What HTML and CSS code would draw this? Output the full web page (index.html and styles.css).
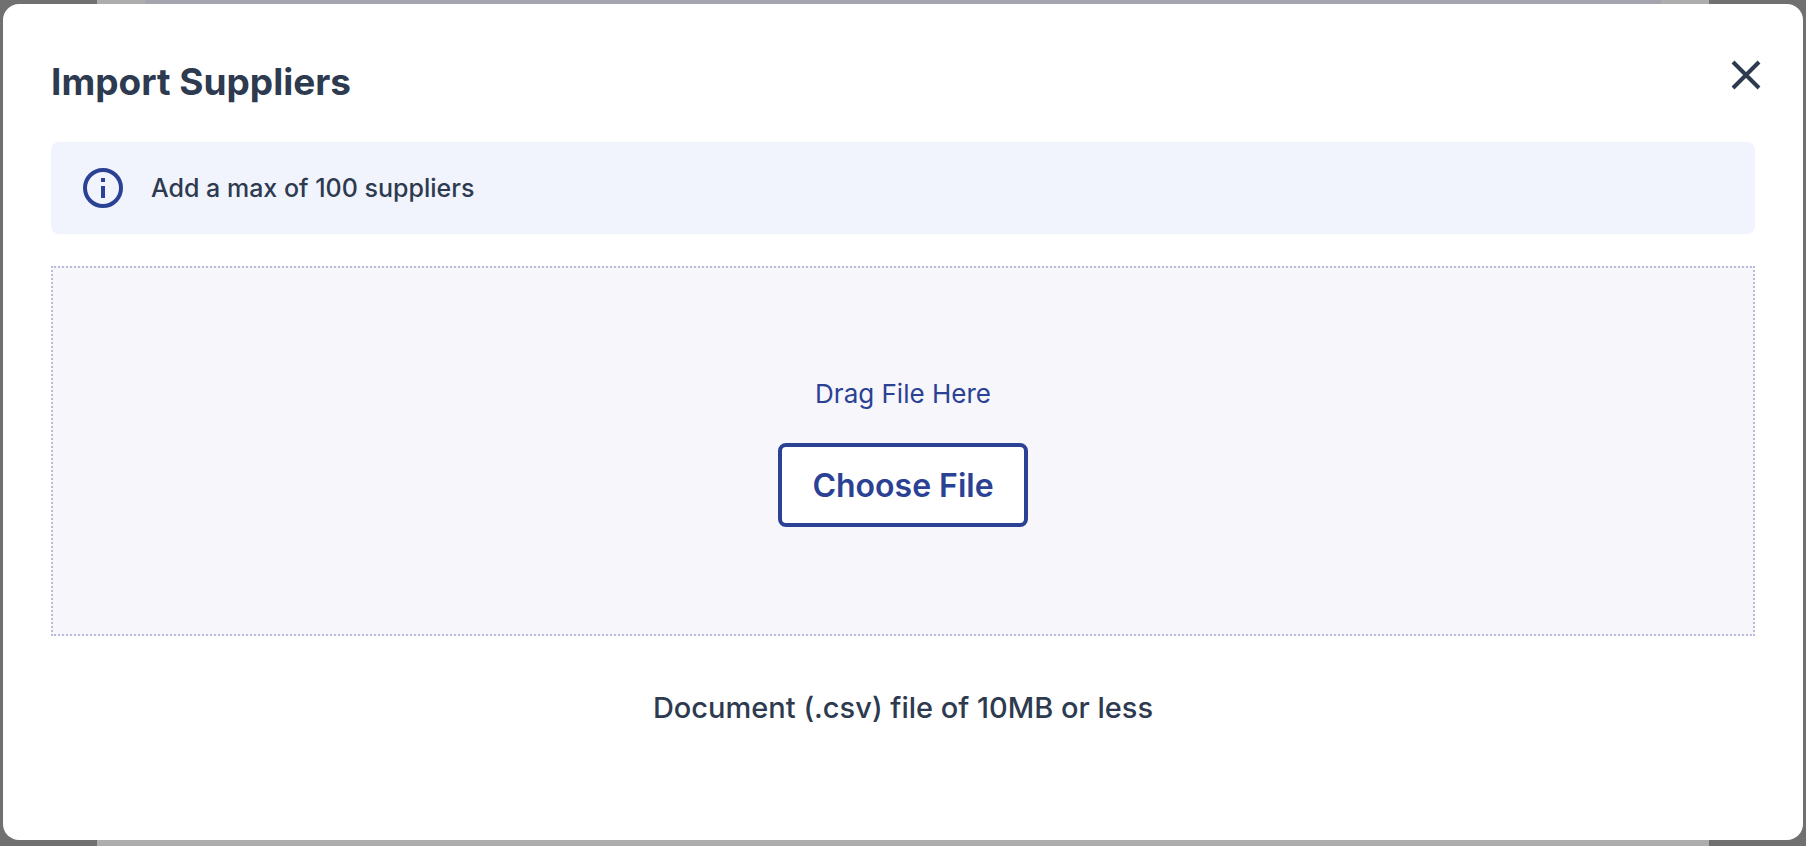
FILE: index.html
```html
<!DOCTYPE html>
<html lang="en">
<head>
<meta charset="utf-8">
<title>Import Suppliers</title>
<link rel="stylesheet" href="styles.css">
</head>
<body>
<div class="backdrop" aria-hidden="true"><div class="backdrop-page"><div class="backdrop-bar"></div></div></div>
<main class="modal" role="dialog" aria-labelledby="modal-title">
  <header class="modal-header">
    <h1 class="modal-title" id="modal-title">Import Suppliers</h1>
    <button class="close-button" type="button" aria-label="Close">
      <svg class="close-icon" viewBox="0 0 30 30" fill="none" stroke="currentColor" stroke-width="4"><path d="M2 2 28 28M28 2 2 28"/></svg>
    </button>
  </header>
  <div class="notice">
    <svg class="notice-icon" viewBox="0 0 40 40" fill="none" aria-hidden="true"><circle cx="20" cy="20" r="18" stroke="currentColor" stroke-width="4"/><path fill="currentColor" d="M18 10h4v4h-4zM18 18h4v12h-4z"/></svg>
    <p class="notice-text">Add a max of 100 suppliers</p>
  </div>
  <section class="dropzone">
    <p class="dropzone-text">Drag File Here</p>
    <button class="choose-button" type="button">Choose File</button>
  </section>
  <p class="file-hint">Document (.csv) file of 10MB or less</p>
</main>
</body>
</html>
```
FILE: styles.css
```css
* { box-sizing: border-box; }

body {
  min-height: 100vh;
  margin: 0;
  padding: 4px 3px 6px;
  display: flex;
  background: #707070;
  color: #2d3a4f;
  font-family: Inter, "Liberation Sans", sans-serif;
}

h1, p { margin: 0; }

button {
  border: 0;
  padding: 0;
  background: none;
  color: inherit;
  font: inherit;
  cursor: pointer;
}

.backdrop {
  position: fixed;
  inset: 0;
  z-index: -1;
  padding: 0 97px;
}

.backdrop-page {
  height: 100%;
  padding: 0 48px;
  background: #adadad;
}

.backdrop-bar {
  height: 40px;
  background: #a3a4ad;
}

.modal {
  flex: 1;
  padding: 48px;
  border-radius: 16px;
  background: #fff;
}

.modal-header {
  display: flex;
  justify-content: space-between;
  align-items: flex-start;
  margin-bottom: 30px;
}

.modal-title {
  padding: 4px 0;
  font-size: 37px;
  line-height: 52px;
  font-weight: 700;
}

.close-button {
  display: flex;
  padding: 8px;
  margin-right: -14px;
}

.close-icon {
  width: 30px;
  height: 30px;
}

.notice {
  display: flex;
  align-items: center;
  gap: 28px;
  padding: 26px 32px;
  border-radius: 8px;
  background: #f1f4fd;
}

.notice-icon {
  width: 40px;
  height: 40px;
  color: #2b4194;
}

.notice-text {
  font-size: 25px;
  line-height: 40px;
  font-weight: 500;
}

.dropzone {
  display: flex;
  flex-direction: column;
  align-items: center;
  gap: 30px;
  margin-top: 32px;
  padding: 107px 24px;
  border: 2px dotted #b7bbdc;
  background: #f6f6fb;
  color: #2b4194;
}

.dropzone-text {
  font-size: 26px;
  line-height: 38px;
}

.choose-button {
  padding: 17px 30px 15px;
  border: 4px solid #2b4194;
  border-radius: 8px;
  background: #fff;
  font-size: 32px;
  line-height: 44px;
  font-weight: 600;
}

.file-hint {
  margin-top: 52px;
  font-size: 29px;
  line-height: 40px;
  font-weight: 500;
  text-align: center;
}
```
